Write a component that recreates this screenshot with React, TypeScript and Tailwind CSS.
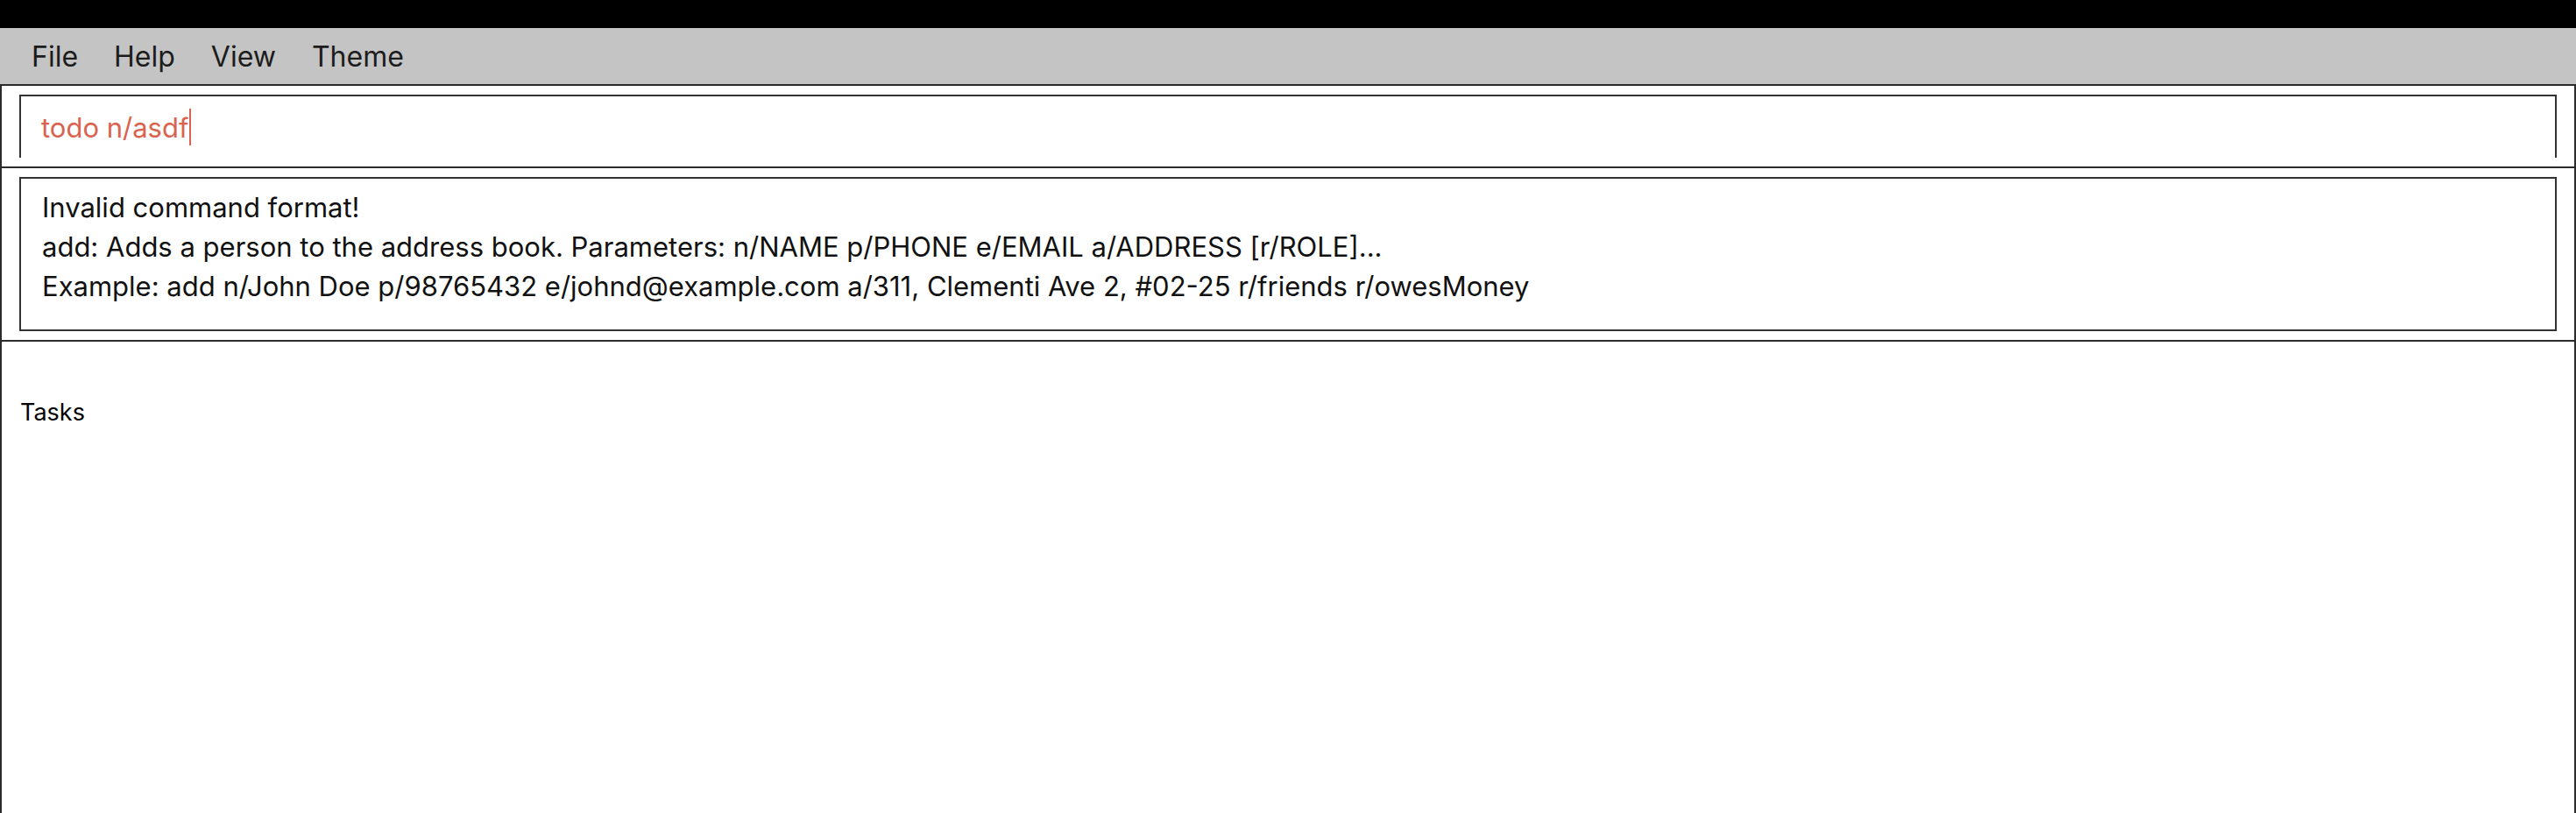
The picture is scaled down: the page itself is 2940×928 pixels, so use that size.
import React from "react";

const menus = ["File", "Help", "View", "Theme"];

const resultLines = [
  "Invalid command format!",
  "add: Adds a person to the address book. Parameters: n/NAME p/PHONE e/EMAIL a/ADDRESS [r/ROLE]...",
  "Example: add n/John Doe p/98765432 e/johnd@example.com a/311, Clementi Ave 2, #02-25 r/friends r/owesMoney",
];

const App: React.FC = () => {
  return (
    <div className="w-[2940px] h-[928px] flex flex-col bg-white overflow-hidden font-['Inter','Liberation_Sans',sans-serif]">
      {/* title strip */}
      <div className="h-[32px] shrink-0 bg-black" />

      {/* menu bar */}
      <div className="h-[64px] shrink-0 bg-[#c4c4c4] flex items-center gap-[41px] pl-[36px] text-[32px] text-[#1c1c1c]">
        {menus.map((m) => (
          <span key={m} className="leading-none pt-[2px]">
            {m}
          </span>
        ))}
      </div>

      {/* command box */}
      <div className="shrink-0 border-2 border-[#2b2b2b] px-[20px] py-[10px]">
        <div className="h-[72px] border-2 border-b-0 border-[#333333] flex items-center pl-[23px]">
          <span className="text-[31px] text-[#d9634f] leading-none">todo n/asdf</span>
          <span className="w-[2px] h-[42px] bg-[#d9634f] ml-[1px]" />
        </div>
      </div>

      {/* result display */}
      <div className="shrink-0 border-2 border-t-0 border-[#2b2b2b] px-[20px] py-[10px]">
        <div className="h-[176px] border-2 border-[#333333] pl-[24px] pt-[10px] text-[31px] leading-[45px] text-[#111111]">
          {resultLines.map((l) => (
            <div key={l} className="whitespace-nowrap">
              {l}
            </div>
          ))}
        </div>
      </div>

      {/* task list panel */}
      <div className="flex-1 border-2 border-t-0 border-b-0 border-[#2b2b2b] pl-[21px] pt-[67px]">
        <div className="text-[27px] leading-none text-black">Tasks</div>
      </div>
    </div>
  );
};

export default App;
